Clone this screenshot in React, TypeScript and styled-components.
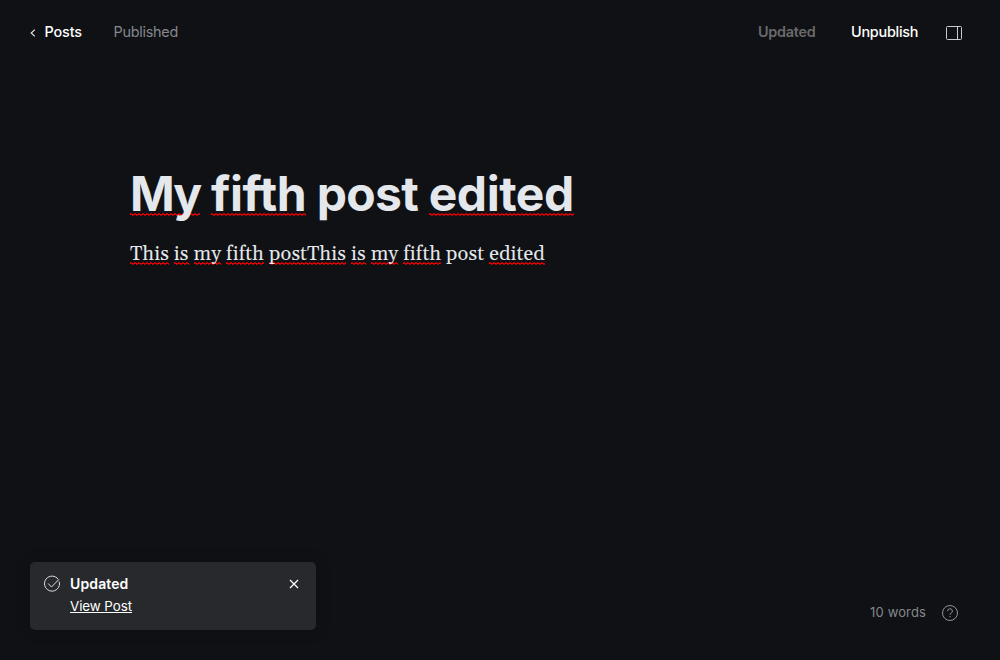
import React from "react";
import styled, { createGlobalStyle } from "styled-components";

const Global = createGlobalStyle`
  * { box-sizing: border-box; }
  body { margin: 0; background: #101114; font-family: Inter, "Liberation Sans", sans-serif; }
`;
const Page = styled.main`
  display: flex; flex-direction: column; width: 1000px; height: 660px; overflow: hidden;
  background: #101114; color: #e4e7eb;
`;
const Header = styled.header`
  display: flex; align-items: center; height: 64px; padding: 0 38px 0 30px; font-size: 14.4px; line-height: 18px;
`;
const Left = styled.div`display: flex; flex: 1;`;
const Back = styled.a`
  display: flex; align-items: center; gap: 8.5px; width: 83.5px; color: #fff; font-weight: 500; letter-spacing: -0.15px;
  svg { margin-top: 1px; }
`;
const Status = styled.span`color: #85888e; letter-spacing: -0.26px;`;
const Action = styled.span<{ $muted?: boolean }>`
  letter-spacing: -0.24px;
  font-weight: ${p => (p.$muted ? 600 : 500)};
  color: ${p => (p.$muted ? "#696a6c" : "#fff")};
  width: ${p => (p.$muted ? "93px" : "95px")};
`;
const PanelIcon = styled.svg`margin-top: 2px;`;
const Editor = styled.section`flex: 1; padding: 102px 130px 0;`;
const Title = styled.h1`
  margin: 0; font-size: 48px; line-height: 56px; font-weight: 700; letter-spacing: -0.8px; white-space: nowrap;
`;
const Body = styled.p`
  margin: 18px 0 0; font: 20px/28px Georgia, Gelasio, "Liberation Serif", serif; letter-spacing: 0.1px; white-space: nowrap;
`;
const Word = styled.span<{ $wrong: boolean; $bottom: number; $tracking?: number }>`
  ${p => p.$tracking !== undefined && `letter-spacing: ${p.$tracking}px;`}
  ${p => p.$wrong && `background: url("data:image/svg+xml,%3Csvg xmlns='http://www.w3.org/2000/svg' width='4' height='3' shape-rendering='crispEdges'%3E%3Cpath d='M0 1h4v1H0z' fill='%23b5060a'/%3E%3Cpath d='M0 0h2v1H0zM2 2h2v1H2z' fill='%23a50508'/%3E%3Cpath d='M0 1h1v1H0zM2 1h1v1H2z' fill='red'/%3E%3C/svg%3E") repeat-x left bottom ${p.$bottom}px;`}
`;
const Footer = styled.footer`
  display: flex; justify-content: space-between; align-items: flex-end; padding: 0 42px 30px 30px;
`;
const Toast = styled.aside`
  display: flex; width: 286px; height: 68px; padding: 13px 17px 0 14px; border-radius: 5px; background: #28292c; color: #fff;
  box-shadow: 0 0 16px #0003;
`;
const ToastText = styled.div`flex: 1; padding-left: 9px; font-size: 14px; line-height: 18px;`;
const ToastTitle = styled.div`font-weight: 600; letter-spacing: 0.12px;`;
const ToastLink = styled.a`display: block; margin-top: 4px; font-size: 13.4px; letter-spacing: -0.08px; text-decoration: underline;`;
const Words = styled.div`display: flex; align-items: center; gap: 16px; height: 34px; font-size: 13px; color: #85888e;`;
const Count = styled.span`letter-spacing: 0.13px; padding-bottom: 2px;`;

type Token = readonly [text: string, wrong: boolean, tracking?: number];
const title: Token[] = [["My", true, -1.9], ["fifth", true, -0.4], ["post", false, -0.7], ["edited", true, -0.45]];
const body: Token[] = [
  ["This", true], ["is", true], ["my", true], ["fifth", true], ["postThis", true],
  ["is", true], ["my", true], ["fifth", true], ["post", false], ["edited", true],
];
function Text({ words, bottom }: { words: Token[]; bottom: number }) {
  return (
    <>
      {words.map(([text, wrong, tracking], i) => (
        <React.Fragment key={i}>
          {i > 0 && " "}
          <Word $wrong={wrong} $bottom={bottom} $tracking={tracking}>{text}</Word>
        </React.Fragment>
      ))}
    </>
  );
}

export default function App() {
  return (
    <Page>
      <Global />
      <Header>
        <Left>
          <Back>
            <svg width="6" height="8" viewBox="0 0 6 8" fill="none" stroke="#e4e4e5" strokeWidth="1.2"><path d="M4.8.6L1.2 4l3.6 3.4" /></svg>
            Posts
          </Back>
          <Status>Published</Status>
        </Left>
        <Action $muted>Updated</Action>
        <Action>Unpublish</Action>
        <PanelIcon width="16" height="14" viewBox="0 0 16 14" fill="none" stroke="#c9cbcd"><rect x=".5" y=".5" width="15" height="13" rx="1" /><path d="M11.5.5v13" /></PanelIcon>
      </Header>
      <Editor>
        <Title><Text words={title} bottom={7} /></Title>
        <Body><Text words={body} bottom={2} /></Body>
      </Editor>
      <Footer>
        <Toast>
          <svg width="17" height="18" viewBox="0 0 17 18" fill="none" stroke="#dedfe0"><path d="M14.2 4.4A7.5 7.5 0 1 0 15.5 9c0-.9-.2-1.7-.4-2.5M4.2 8.5L7.5 12l7.3-7.5" /></svg>
          <ToastText><ToastTitle>Updated</ToastTitle><ToastLink>View Post</ToastLink></ToastText>
          <svg width="10" height="18" viewBox="0 0 10 18" stroke="#fff" strokeWidth="1.2"><path d="M1 5l8 8M9 5l-8 8" /></svg>
        </Toast>
        <Words>
          <Count>10 words</Count>
          <svg width="16" height="16" viewBox="0 0 16 16" fill="none" stroke="#919397"><circle cx="8" cy="8" r="7.5" /><path d="M5.6 6.2a2.4 2.4 0 1 1 3.4 2.1c-.7.3-1 .6-1 1.4M8 11v1.2" /></svg>
        </Words>
      </Footer>
    </Page>
  );
}
